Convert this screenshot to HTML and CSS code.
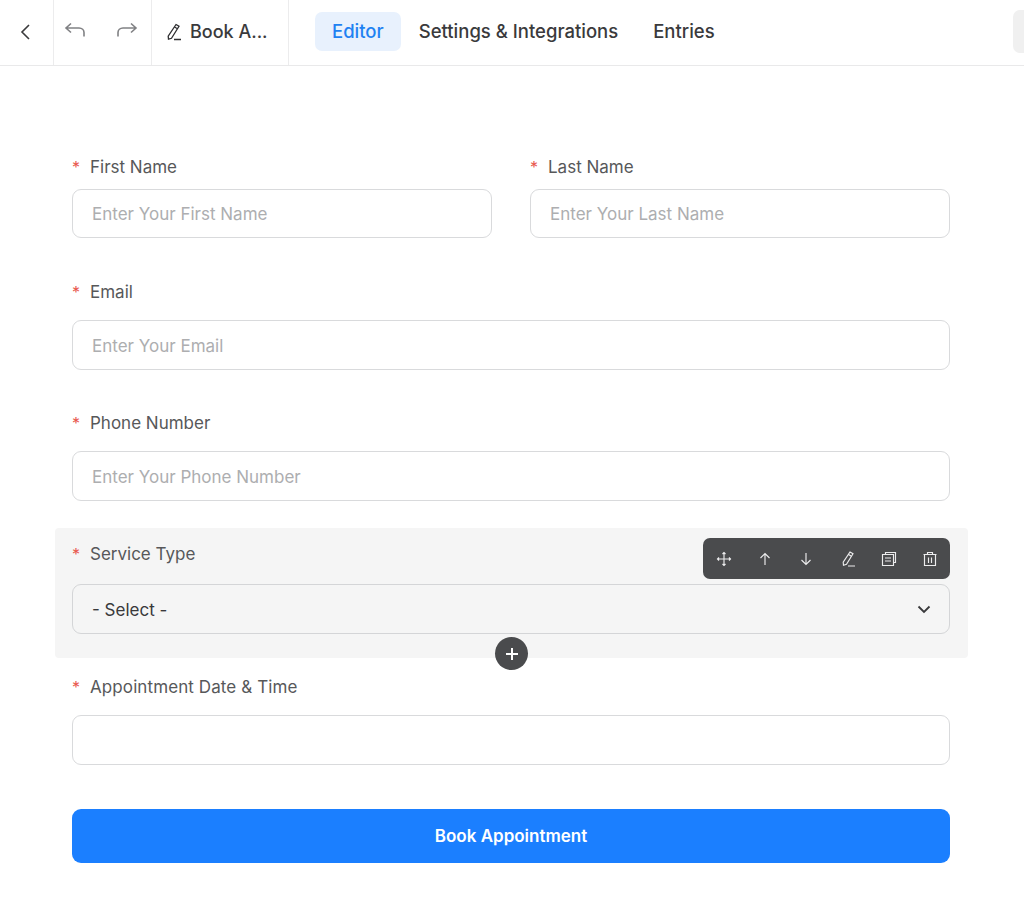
FILE: index.html
```html
<!DOCTYPE html>
<html lang="en">
<head>
<meta charset="utf-8">
<title>Book Appointment - Editor</title>
<link rel="stylesheet" href="styles.css">
</head>
<body>
<header class="topbar">
  <button class="cell cell-back" aria-label="Back">
    <svg class="icon-back" viewBox="0 0 12 18"><path d="M10 2 3 9l7 7"/></svg>
  </button>
  <div class="cell cell-history">
    <svg class="icon-hist" viewBox="0 0 22 16"><path d="M7 1.500 2 6 7 10.500M2 6h13c3 0 5 2 5 4.500V14.500"/></svg>
    <svg class="icon-hist" viewBox="0 0 22 16"><path d="M15 1.500 20 6l-5 4.500M20 6H7c-3 0-5 2-5 4.500V14.500"/></svg>
  </div>
  <div class="cell cell-title">
    <svg class="icon-pen" viewBox="0 0 18 18"><path d="M11 1.500l3 1.800-7.500 12-3 .9-.3-3.100zM9.500 4l3 1.800M9 16.500h7"/></svg>
    <span>Book A...</span>
  </div>
  <nav class="tabs">
    <a class="tab tab-active">Editor</a>
    <a class="tab">Settings &amp; Integrations</a>
    <a class="tab">Entries</a>
  </nav>
  <div class="stub"></div>
</header>

<main class="form">
  <div class="row">
    <div class="field-first">
      <label class="label"><span class="req">*</span>First Name</label>
      <div class="input input-short placeholder">Enter Your First Name</div>
    </div>
    <div class="field-first">
      <label class="label"><span class="req">*</span>Last Name</label>
      <div class="input input-short placeholder">Enter Your Last Name</div>
    </div>
  </div>
  <div class="field">
    <label class="label"><span class="req">*</span>Email</label>
    <div class="input placeholder">Enter Your Email</div>
  </div>
  <div class="field">
    <label class="label"><span class="req">*</span>Phone Number</label>
    <div class="input placeholder">Enter Your Phone Number</div>
  </div>
  <div class="field field-selected">
    <label class="label"><span class="req">*</span>Service Type</label>
    <div class="input select">
      <span>- Select -</span>
      <svg class="icon-chev" viewBox="0 0 14 9"><path d="M1.500 1.500 7 7l5.500-5.500"/></svg>
    </div>
    <div class="toolbar">
      <svg class="tool" viewBox="0 0 16 16"><path d="M8 1v14M1 8h14M6.500 3 8 1.500 9.500 3M6.500 13 8 14.500 9.500 13M3 6.500 1.500 8 3 9.500M13 6.500 14.500 8 13 9.500"/></svg>
      <svg class="tool" viewBox="0 0 16 16"><path d="M8 14V2.500M3.500 7 8 2.500 12.500 7"/></svg>
      <svg class="tool" viewBox="0 0 16 16"><path d="M8 2v11.500M3.500 9 8 13.500 12.500 9"/></svg>
      <svg class="tool" viewBox="0 0 16 16"><path d="M10 1l3 1.800-6.500 10.500-3 1-.3-3.200zM8.500 3.500l3 1.800M8 15h7"/></svg>
      <svg class="tool" viewBox="0 0 16 16"><path d="M4.500 3.500V1.500h10v10h-2M1.500 3.500h11v11h-11zM4 7h6M4 10h6"/></svg>
      <svg class="tool" viewBox="0 0 16 16"><path d="M1.500 3.500h13M5.500 3.500V1.500h5v2M2.500 3.500v11h11v-11M6.500 6.500v5.500M9.500 6.500v5.500"/></svg>
    </div>
    <button class="add" aria-label="Add field">
      <svg viewBox="0 0 14 14"><path d="M7 1v12M1 7h12"/></svg>
    </button>
  </div>
  <div class="field field-date">
    <label class="label"><span class="req">*</span>Appointment Date &amp; Time</label>
    <div class="input"></div>
  </div>
  <button class="submit">Book Appointment</button>
</main>
</body>
</html>
```
FILE: styles.css
```css
* { box-sizing: border-box; }
html, body { margin: 0; height: 901px; overflow: hidden; background: #fff; }
body { font-family: Inter, "Liberation Sans", sans-serif; color: #3c3c3e; }
button { font: inherit; border: 0; background: none; padding: 0; }

.topbar { display: flex; align-items: flex-start; height: 66px; border-bottom: 1px solid #e9e9ea; }
.cell { display: flex; align-items: center; height: 65px; padding-bottom: 2px; border-right: 1px solid #ececed; }
.cell-back { width: 54px; padding-left: 19px; }
.cell-history { width: 98px; gap: 30px; padding-left: 10px; padding-bottom: 6px; }
.cell-title { width: 137px; padding-left: 13px; gap: 7px; font-size: 18px; font-weight: 500; color: #3a3a3c; }
.icon-back { width: 12px; height: 18px; fill: none; stroke: #3a3a3c; stroke-width: 1.600; }
.icon-hist { width: 22px; height: 16px; fill: none; stroke: #808184; stroke-width: 1.600; }
.icon-pen { width: 18px; height: 18px; fill: none; stroke: #2f2f31; stroke-width: 1.300; }

.tabs { display: flex; gap: 1px; margin: 12px 0 0 26px; }
.tab { height: 39px; display: flex; align-items: center; padding: 0 17px 1px; border-radius: 7px; font-size: 18.500px; font-weight: 500; color: #3a3a3c; }
.tab-active { background: #e8f1fd; color: #1f82f2; }
.stub { margin: 10px 0 0 auto; width: 11px; height: 43px; background: #f0f0f0; border-radius: 7px 0 0 7px; }

.form { padding: 67px 56px 0 55px; }
.row { display: grid; grid-template-columns: 420px 420px; column-gap: 38px; height: 131px; padding: 22px 0 0 17px; }
.field { position: relative; height: 131px; padding: 16px 18px 0 17px; }
.label { display: block; height: 24px; line-height: 24px; margin-bottom: 16px; font-size: 17px; color: #57585a; white-space: nowrap; }
.field-first .label { margin-bottom: 10px; }
.req { display: inline-block; width: 18px; color: #e8574d; font-size: 16px; }
.input { display: flex; align-items: center; height: 50px; padding: 1px 19px 0; border: 1px solid #d9dadc; border-radius: 9px; background: #fff; font-size: 17px; }
.input-short { height: 49px; padding-top: 0; }
.placeholder { color: #adaeb0; }

.field-selected { height: 130px; margin-top: 2px; padding-top: 14px; background: #f5f5f5; border-radius: 4px; }
.field-selected .label { margin-bottom: 18px; }
.select { justify-content: space-between; background: #f5f5f5; color: #39393b; padding-right: 18px; border-color: #d4d5d7; }
.icon-chev { width: 14px; height: 9px; fill: none; stroke: #39393b; stroke-width: 1.800; }

.field-date { padding-top: 17px; }
.field-date .label { margin-bottom: 16px; letter-spacing: .1px; }

.toolbar { position: absolute; top: 10px; right: 18px; width: 247px; height: 41px; display: flex; align-items: center; justify-content: space-between; padding: 0 12px 0 13px; background: #4a4b4d; border-radius: 7px; }
.tool { width: 16px; height: 16px; fill: none; stroke: #ececed; stroke-width: 1.150; }
.add { position: absolute; left: 440px; top: 109px; width: 33px; height: 33px; border-radius: 50%; background: #4a4b4d; display: flex; align-items: center; justify-content: center; }
.add svg { width: 14px; height: 14px; fill: none; stroke: #fff; stroke-width: 2; }

.submit { display: block; width: 878px; height: 54px; margin: 20px 0 0 17px; background: #1b7fff; color: #fff; border-radius: 9px; font-size: 17px; font-weight: 600; }
```
